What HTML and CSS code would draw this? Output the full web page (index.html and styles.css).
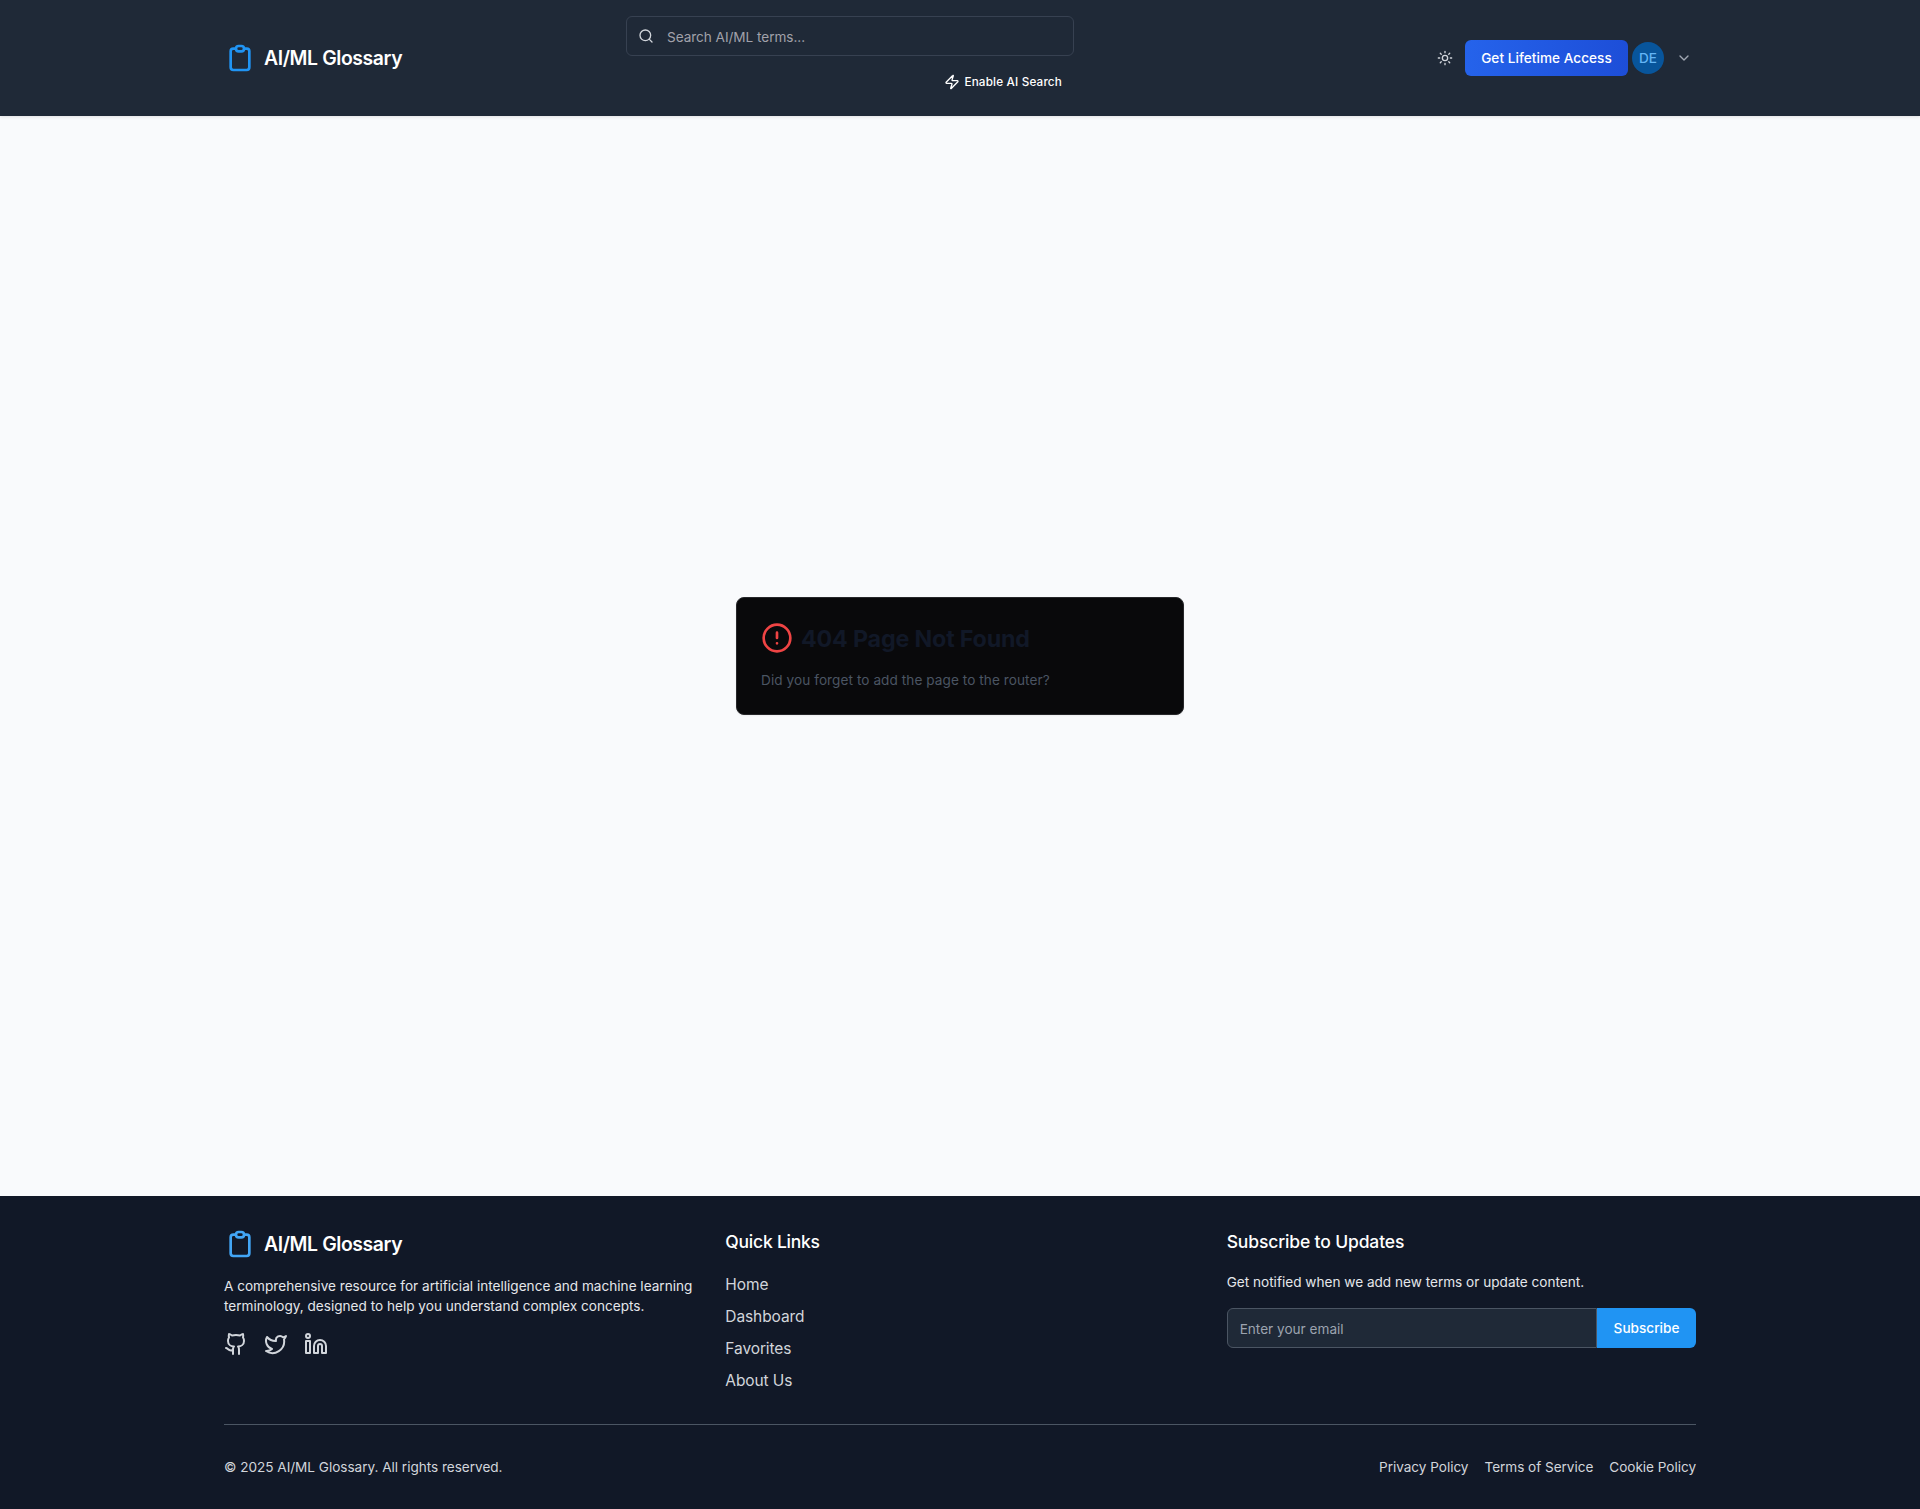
FILE: index.html
```html
<!DOCTYPE html>
<html lang="en">
<head>
<meta charset="utf-8">
<title>AI/ML Glossary</title>
<link rel="stylesheet" href="styles.css">
</head>
<body>
<header class="header">
  <div class="container header-row">
    <a class="brand" href="#">
      <svg class="brand-icon" viewBox="0 0 24 24"><path d="M9 5H7a2 2 0 00-2 2v12a2 2 0 002 2h10a2 2 0 002-2V7a2 2 0 00-2-2h-2M9 5a2 2 0 002 2h2a2 2 0 002-2M9 5a2 2 0 012-2h2a2 2 0 012 2"/></svg>
      <span class="brand-name">AI/ML Glossary</span>
    </a>
    <div class="search">
      <div class="search-box">
        <svg class="icon-16" viewBox="0 0 24 24"><circle cx="11" cy="11" r="8"/><path d="m21 21-4.3-4.3"/></svg>
        <input class="search-input" type="text" placeholder="Search AI/ML terms...">
      </div>
      <button class="ai-toggle">
        <svg class="icon-16" viewBox="0 0 24 24"><path d="M4 14a1 1 0 0 1-.78-1.63l9.9-10.2a.5.5 0 0 1 .86.46l-1.92 6.02A1 1 0 0 0 13 10h7a1 1 0 0 1 .78 1.63l-9.9 10.2a.5.5 0 0 1-.86-.46l1.92-6.02A1 1 0 0 0 11 14z"/></svg>
        <span>Enable AI Search</span>
      </button>
    </div>
    <div class="actions">
      <button class="theme-toggle" aria-label="Toggle theme">
        <svg class="icon-16" viewBox="0 0 24 24"><circle cx="12" cy="12" r="4"/><path d="M12 2v2M12 20v2M4.93 4.93l1.41 1.41M17.66 17.66l1.41 1.41M2 12h2M20 12h2M6.34 17.66l-1.41 1.41M19.07 4.93l-1.41 1.41"/></svg>
      </button>
      <button class="access">Get Lifetime Access</button>
      <span class="avatar">DE</span>
      <button class="menu-toggle" aria-label="Account menu">
        <svg class="icon-16" viewBox="0 0 24 24"><path d="m6 9 6 6 6-6"/></svg>
      </button>
    </div>
  </div>
</header>
<main class="main">
  <section class="card">
    <div class="card-head">
      <svg class="alert-icon" viewBox="0 0 24 24"><circle cx="12" cy="12" r="10"/><path d="M12 8v4M12 16h.01"/></svg>
      <h1 class="card-title">404 Page Not Found</h1>
    </div>
    <p class="card-text">Did you forget to add the page to the router?</p>
  </section>
</main>
<footer class="footer">
  <div class="container">
    <div class="footer-grid">
      <div>
        <a class="brand brand-footer" href="#">
          <svg class="brand-icon" viewBox="0 0 24 24"><path d="M9 5H7a2 2 0 00-2 2v12a2 2 0 002 2h10a2 2 0 002-2V7a2 2 0 00-2-2h-2M9 5a2 2 0 002 2h2a2 2 0 002-2M9 5a2 2 0 012-2h2a2 2 0 012 2"/></svg>
          <span class="brand-name">AI/ML Glossary</span>
        </a>
        <p class="footer-text">A comprehensive resource for artificial intelligence and machine learning terminology, designed to help you understand complex concepts.</p>
        <div class="social">
          <svg class="icon-24" viewBox="0 0 24 24"><path d="M15 22v-4a4.8 4.8 0 0 0-1-3.5c3 0 6-2 6-5.5.08-1.25-.27-2.48-1-3.5.28-1.15.28-2.35 0-3.5 0 0-1 0-3 1.5-2.64-.5-5.36-.5-8 0C6 2 5 2 5 2c-.3 1.15-.3 2.35 0 3.5A5.403 5.403 0 0 0 4 9c0 3.5 3 5.5 6 5.5-.39.49-.68 1.05-.85 1.65-.17.6-.22 1.23-.15 1.85v4"/><path d="M9 18c-4.51 2-5-2-7-2"/></svg>
          <svg class="icon-24" viewBox="0 0 24 24"><path d="M22 4s-.7 2.1-2 3.4c1.6 10-9.4 17.3-18 11.6 2.2.1 4.4-.6 6-2C3 15.5.5 9.6 3 5c2.2 2.6 5.6 4.1 9 4-.9-4.2 4-6.6 7-3.8 1.1 0 3-1.2 3-1.2z"/></svg>
          <svg class="icon-24" viewBox="0 0 24 24"><path d="M16 8a6 6 0 0 1 6 6v7h-4v-7a2 2 0 0 0-2-2 2 2 0 0 0-2 2v7h-4v-7a6 6 0 0 1 6-6z"/><rect width="4" height="12" x="2" y="9"/><circle cx="4" cy="4" r="2"/></svg>
        </div>
      </div>
      <div>
        <h3 class="footer-title title-links">Quick Links</h3>
        <ul class="links">
          <li><a href="#">Home</a></li>
          <li><a href="#">Dashboard</a></li>
          <li><a href="#">Favorites</a></li>
          <li><a href="#">About Us</a></li>
        </ul>
      </div>
      <div>
        <h3 class="footer-title">Subscribe to Updates</h3>
        <p class="footer-text">Get notified when we add new terms or update content.</p>
        <form class="subscribe">
          <input class="email" type="email" placeholder="Enter your email">
          <button class="subscribe-btn" type="button">Subscribe</button>
        </form>
      </div>
    </div>
    <div class="legal">
      <p class="copyright">© 2025 AI/ML Glossary. All rights reserved.</p>
      <nav class="legal-links">
        <a href="#">Privacy Policy</a>
        <a href="#">Terms of Service</a>
        <a href="#">Cookie Policy</a>
      </nav>
    </div>
  </div>
</footer>
</body>
</html>
```
FILE: styles.css
```css
*, *::before, *::after { box-sizing: border-box; }
body, h1, h3, p, ul { margin: 0; padding: 0; }
body {
  font-family: Inter, "Liberation Sans", sans-serif;
  font-size: 15.5px;
  line-height: 24px;
  background: #f9fafc;
  color: #fff;
  -webkit-font-smoothing: antialiased;
}
a { color: inherit; text-decoration: none; }
ul { list-style: none; }
button, input { font: inherit; color: inherit; border: 0; background: none; margin: 0; padding: 0; }
svg {
  display: block;
  flex: none;
  fill: none;
  stroke: currentColor;
  stroke-width: 2;
  stroke-linecap: round;
  stroke-linejoin: round;
}
.icon-16 { width: 16px; height: 16px; }
.icon-24 { width: 24px; height: 24px; }
.container { max-width: 1536px; margin: 0 auto; padding: 0 32px; }

.header { background: #1f2937; padding: 16px 0; box-shadow: 0 1px 3px rgba(0, 0, 0, .1); }
.header-row { display: flex; align-items: center; justify-content: space-between; }
.brand { display: flex; align-items: center; gap: 8px; }
.brand-icon { width: 32px; height: 32px; color: #2094f3; }
.brand-name { font-size: 19.4px; line-height: 28px; font-weight: 600; letter-spacing: -0.4px; }
.header .brand { width: 402px; }

.search { width: 448px; display: flex; flex-direction: column; align-items: flex-end; gap: 8px; }
.search-box {
  width: 100%;
  height: 40px;
  display: flex;
  align-items: center;
  gap: 13px;
  padding: 0 12px 0 11px;
  border: 1px solid #374151;
  border-radius: 6px;
  color: #d1d5db;
}
.search-input { flex: 1; font-size: 13.6px; line-height: 20px; padding-top: 1px; outline: none; letter-spacing: -0.05px; }
.search-input::placeholder { color: #a1a1aa; }
.ai-toggle {
  height: 36px;
  display: flex;
  align-items: center;
  gap: 4px;
  padding: 0 12px;
  font-size: 11.7px;
  line-height: 16px;
  font-weight: 500;
  letter-spacing: 0.18px;
}

.actions { width: 622px; display: flex; align-items: center; justify-content: flex-end; gap: 4px; }
.theme-toggle { padding: 8px; color: #d1d5db; }
.access {
  height: 36px;
  width: 163px;
  border-radius: 6px;
  font-size: 13.6px;
  font-weight: 500;
  letter-spacing: 0.04px;
  background: linear-gradient(to right, #2563eb, #1d4ed8);
}
.avatar {
  width: 32px;
  height: 32px;
  border-radius: 50%;
  background: #08559b;
  color: #64b5f6;
  font-size: 13.6px;
  font-weight: 500;
  line-height: 32px;
  text-align: center;
}
.menu-toggle { padding: 8px 4px 8px 8px; color: #a1a8b3; }

.main { min-height: 1080px; display: flex; align-items: center; justify-content: center; }
.card {
  width: 448px;
  padding: 24px;
  background: #09090b;
  border: 1px solid #27272a;
  border-radius: 8px;
  box-shadow: 0 1px 2px rgba(0, 0, 0, .05);
}
.card-head { display: flex; align-items: center; gap: 8px; margin-bottom: 16px; }
.alert-icon { width: 32px; height: 32px; color: #ef4444; }
.card-title { font-size: 23.3px; line-height: 30px; padding-top: 2px; font-weight: 700; color: #111827; letter-spacing: -0.19px; }
.card-text { font-size: 13.6px; line-height: 20px; color: #4b5563; letter-spacing: 0.07px; }

.footer { background: #111827; padding: 32px 0; }
.footer-grid { display: grid; grid-template-columns: repeat(3, 1fr); gap: 32px; }
.brand-footer { margin-bottom: 16px; }
.brand-footer .brand-icon { color: #42a5f5; }
.footer-text { font-size: 13.6px; line-height: 20px; margin-bottom: 16px; color: #e5e7eb; }
.social { display: flex; gap: 16px; color: #d1d5db; }
.footer-title { font-size: 17.5px; line-height: 28px; font-weight: 500; margin-bottom: 16px; letter-spacing: -0.14px; }
.title-links { letter-spacing: -0.23px; }
.links { display: grid; gap: 6px; margin-bottom: -2px; line-height: 26px; color: #d1d5db; letter-spacing: -0.1px; }
.subscribe { display: flex; }
.email {
  flex: 1;
  min-width: 0;
  height: 40px;
  padding: 1px 12px 0;
  font-size: 13.6px;
  background: #1f2937;
  border: 1px solid #4b5563;
  border-radius: 6px 0 0 6px;
}
.email::placeholder { color: #9ca3af; }
.subscribe-btn {
  width: 99px;
  height: 40px;
  background: #2094f3;
  border-radius: 0 6px 6px 0;
  font-size: 13.6px;
  font-weight: 500;
}
.legal {
  display: flex;
  justify-content: space-between;
  margin-top: 32px;
  padding-top: 32px;
  border-top: 1px solid #4b5563;
  font-size: 13.6px;
  line-height: 20px;
  color: #d1d5db;
}
.copyright { letter-spacing: -0.03px; }
.legal-links { display: flex; gap: 16px; letter-spacing: -0.04px; }
```
